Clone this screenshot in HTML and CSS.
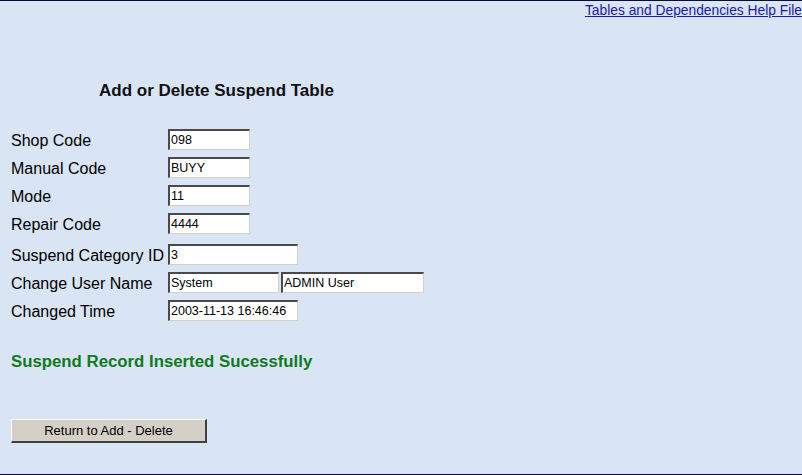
FILE: index.html
```html
<!DOCTYPE html>
<html>
<head>
<meta charset="utf-8">
<link rel="stylesheet" href="styles.css">
</head>
<body>
<div class="page">
  <div class="topbar"><a class="help" href="#">Tables and Dependencies Help File</a></div>
  <h1 class="title">Add or Delete Suspend Table</h1>
  <div class="form form-a">
    <span class="label">Shop Code</span><span class="field"><input class="box short" value="098"></span>
    <span class="label">Manual Code</span><span class="field"><input class="box short" value="BUYY"></span>
    <span class="label">Mode</span><span class="field"><input class="box short" value="11"></span>
    <span class="label">Repair Code</span><span class="field"><input class="box short" value="4444"></span>
  </div>
  <div class="form form-b">
    <span class="label">Suspend Category ID</span><span class="field"><input class="box medium" value="3"></span>
    <span class="label">Change User Name</span><span class="field"><input class="box user" value="System"><input class="box name" value="ADMIN User"></span>
    <span class="label">Changed Time</span><span class="field"><input class="box medium" value="2003-11-13 16:46:46"></span>
  </div>
  <p class="message">Suspend Record Inserted Sucessfully</p>
  <button class="btn" type="button">Return to Add - Delete</button>
</div>
</body>
</html>
```
FILE: styles.css
```css
html, body {
  margin: 0;
  padding: 0;
  background: #d9e4f5;
}
.page {
  box-sizing: border-box;
  width: 802px;
  height: 475px;
  border-top: 1px solid #0b0b3b;
  border-bottom: 1px solid #0b0b3b;
  background: #d9e4f5;
  font-family: "Liberation Sans", Arial, sans-serif;
  color: #000;
  overflow: hidden;
}
.topbar {
  padding-top: 1px;
  text-align: right;
  line-height: 16px;
  height: 17px;
  white-space: nowrap;
}
.help {
  font-size: 13.8px;
  color: #1b1ba8;
  text-decoration: underline;
}
.title {
  margin: 63px 0 0 99px;
  font-size: 17px;
  font-weight: bold;
  line-height: 18px;
  color: #111;
}
.form {
  display: grid;
  grid-template-columns: 157px auto;
  grid-auto-rows: 21px;
  row-gap: 7px;
  margin-left: 11px;
  align-items: center;
}
.form-a {
  margin-top: 29px;
}
.form-b {
  margin-top: 10px;
}
.label {
  font-size: 16px;
  line-height: 18px;
  padding-top: 2px;
  white-space: nowrap;
}
.field {
  display: flex;
  gap: 2px;
  height: 21px;
}
.box {
  box-sizing: border-box;
  height: 21px;
  margin: 0;
  padding: 0 0 0 1px;
  font-family: "Liberation Sans", Arial, sans-serif;
  font-size: 12.5px;
  color: #000;
  background: #fff;
  border-top: 2px solid #4a4a4a;
  border-left: 2px solid #4a4a4a;
  border-right: 1px solid #d4d0c8;
  border-bottom: 1px solid #d4d0c8;
  outline: none;
}
.short { width: 82px; }
.medium { width: 130px; }
.user { width: 111px; }
.name { width: 143px; }
.message {
  margin: 32px 0 0 11px;
  font-size: 16.8px;
  font-weight: bold;
  line-height: 18px;
  color: #0f7a1c;
}
.btn {
  display: block;
  box-sizing: border-box;
  width: 196px;
  height: 24px;
  margin: 48px 0 0 11px;
  padding: 0;
  font-family: "Liberation Sans", Arial, sans-serif;
  font-size: 13px;
  color: #000;
  background: #d4d0c8;
  border-top: 1px solid #fff;
  border-left: 1px solid #fff;
  border-right: 2px solid #404040;
  border-bottom: 2px solid #404040;
  border-radius: 0;
}
```
